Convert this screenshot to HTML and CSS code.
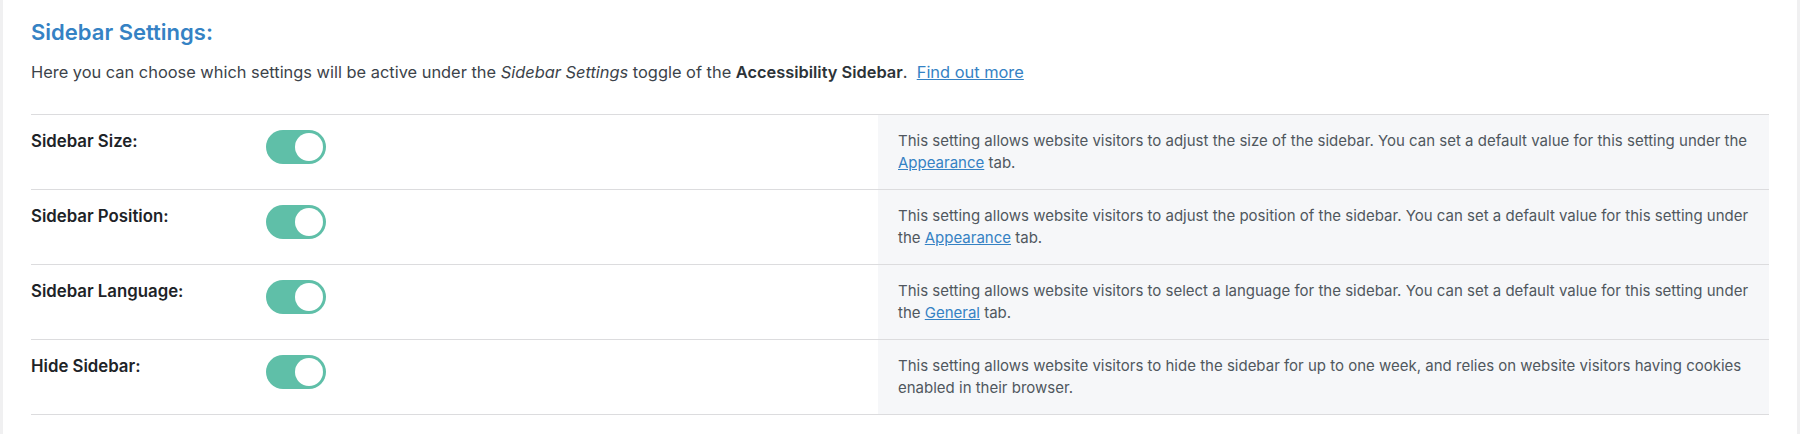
FILE: index.html
```html
<!DOCTYPE html>
<html lang="en">
<head>
<meta charset="utf-8">
<title>Sidebar Settings</title>
<link rel="stylesheet" href="styles.css">
</head>
<body>
<div class="card">
  <h2 class="title">Sidebar Settings:</h2>
  <p class="intro">Here you can choose which settings will be active under the <em>Sidebar Settings</em> toggle of the <strong>Accessibility Sidebar</strong>.&nbsp; <a href="#">Find out more</a></p>
  <div class="table">
    <div class="row">
      <div class="label">Sidebar Size:</div>
      <div class="control"><span class="toggle"><span class="knob"></span></span></div>
      <div class="desc">This setting allows website visitors to adjust the size of the sidebar. You can set a default value for this setting under the <a href="#">Appearance</a> tab.</div>
    </div>
    <div class="row">
      <div class="label">Sidebar Position:</div>
      <div class="control"><span class="toggle"><span class="knob"></span></span></div>
      <div class="desc">This setting allows website visitors to adjust the position of the sidebar. You can set a default value for this setting under the <a href="#">Appearance</a> tab.</div>
    </div>
    <div class="row">
      <div class="label">Sidebar Language:</div>
      <div class="control"><span class="toggle"><span class="knob"></span></span></div>
      <div class="desc">This setting allows website visitors to select a language for the sidebar. You can set a default value for this setting under the <a href="#">General</a> tab.</div>
    </div>
    <div class="row">
      <div class="label">Hide Sidebar:</div>
      <div class="control"><span class="toggle"><span class="knob"></span></span></div>
      <div class="desc">This setting allows website visitors to hide the sidebar for up to one week, and relies on website visitors having cookies enabled in their browser.</div>
    </div>
  </div>
</div>
</body>
</html>
```
FILE: styles.css
```css
html, body {
  margin: 0;
  padding: 0;
}
body {
  background: #f0f0f1;
  font-family: Inter, "Noto Sans", sans-serif;
  color: #3c434a;
}
.card {
  background: #fff;
  margin: 0 3px;
  height: 434px;
  box-sizing: border-box;
  padding: 18px 28px 0 28px;
}
.title {
  margin: 0;
  font-size: 22px;
  line-height: 28px;
  font-weight: 600;
  color: #3582c4;
}
.intro {
  margin: 14px 0 0 0;
  font-size: 16.4px;
  line-height: 24px;
  color: #3c434a;
}
.intro strong {
  font-weight: 600;
  color: #2c3338;
}
.intro a, .desc a {
  color: #3582c4;
  text-decoration: underline;
}
.table {
  margin-top: 30px;
  border-top: 1px solid #dcdcde;
}
.row {
  display: grid;
  grid-template-columns: 235px 612px 1fr;
  border-bottom: 1px solid #dcdcde;
}
.label {
  padding: 15px 0 0 0;
  font-size: 16.8px;
  line-height: 22px;
  font-weight: 600;
  color: #1d2327;
}
.control {
  padding-top: 15px;
}
.toggle {
  display: flex;
  align-items: center;
  justify-content: flex-end;
  width: 60px;
  height: 34px;
  padding: 0 3px;
  box-sizing: border-box;
  border-radius: 17px;
  background: #5fbfa8;
}
.knob {
  width: 28px;
  height: 28px;
  border-radius: 50%;
  background: #fff;
}
.desc {
  background: #f6f7f9;
  padding: 15px 20px;
  font-size: 15px;
  line-height: 22px;
  color: #50575e;
}
```
